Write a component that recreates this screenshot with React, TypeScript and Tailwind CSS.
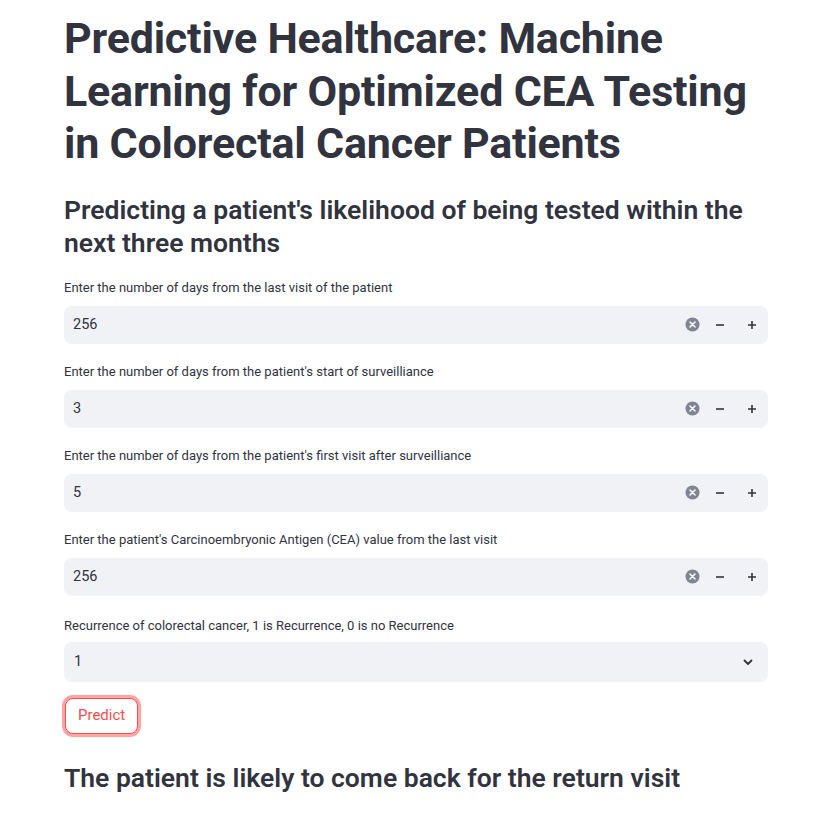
import { useState } from "react";

const FIELDS = [
  { label: "Enter the number of days from the last visit of the patient", value: "256" },
  { label: "Enter the number of days from the patient's start of surveilliance", value: "3" },
  { label: "Enter the number of days from the patient's first visit after surveilliance", value: "5" },
  { label: "Enter the patient's Carcinoembryonic Antigen (CEA) value from the last visit", value: "256" },
];

function ClearIcon() {
  return (
    <svg width="15" height="15" viewBox="0 0 16 16">
      <circle cx="8" cy="8" r="7.5" fill="#808495" />
      <path d="M5.3 5.3l5.4 5.4M10.7 5.3l-5.4 5.4" stroke="#fff" strokeWidth="1.6" strokeLinecap="round" />
    </svg>
  );
}

function NumberField({ label, initial }: { label: string; initial: string }) {
  const [val, setVal] = useState(initial);
  const step = (d: number) => setVal(v => String((parseInt(v || "0", 10) || 0) + d));
  return (
    <div className="mb-[18px]">
      <div className="text-[13px] leading-[20px] mb-[8px] text-[#31333f]">{label}</div>
      <div className="flex items-center h-[38px] rounded-[8px] bg-[#f0f2f6]">
        <input
          className="flex-1 min-w-0 bg-transparent outline-none pl-[9px] text-[14.5px] text-[#31333f]"
          value={val}
          onChange={e => setVal(e.target.value)}
        />
        <button className="w-[24px] h-full flex items-center justify-center" onClick={() => setVal("")}>
          <ClearIcon />
        </button>
        <button className="w-[32px] h-full flex items-center justify-center text-[#31333f]" onClick={() => step(-1)}>
          <svg width="10" height="10" viewBox="0 0 10 10"><path d="M1 5h8" stroke="currentColor" strokeWidth="1.6" /></svg>
        </button>
        <button className="w-[32px] h-full flex items-center justify-center text-[#31333f]" onClick={() => step(1)}>
          <svg width="10" height="10" viewBox="0 0 10 10"><path d="M1 5h8M5 1v8" stroke="currentColor" strokeWidth="1.6" /></svg>
        </button>
      </div>
    </div>
  );
}

export default function App() {
  return (
    <div className="min-h-[837px] bg-white text-[#31333f] font-['Roboto',sans-serif]">
      <div className="ml-[64px] w-[704px] pt-[12px]">
        <h1 className="text-[43px] leading-[52.5px] font-bold tracking-[-0.2px] mb-[23px]">
          Predictive Healthcare: Machine Learning for Optimized CEA Testing in Colorectal Cancer Patients
        </h1>
        <h3 className="text-[26.5px] leading-[33px] font-semibold mb-[19px]">
          Predicting a patient's likelihood of being tested within the next three months
        </h3>
        {FIELDS.map(f => (
          <NumberField key={f.label} label={f.label} initial={f.value} />
        ))}
        <div className="pt-[2px] mb-[16px]">
          <div className="text-[13px] leading-[20px] mb-[6px]">Recurrence of colorectal cancer, 1 is Recurrence, 0 is no Recurrence</div>
          <div className="flex items-center h-[40px] rounded-[8px] bg-[#f0f2f6] pl-[10px] pr-[14px]">
            <span className="flex-1 text-[14.5px]">1</span>
            <svg width="12" height="12" viewBox="0 0 12 12">
              <path d="M2.5 4.5L6 8l3.5-3.5" fill="none" stroke="#31333f" strokeWidth="1.8" strokeLinecap="round" strokeLinejoin="round" />
            </svg>
          </div>
        </div>
        <button className="ml-[1px] h-[36px] px-[12px] rounded-[8px] border border-[#ff4b4b] text-[#ff4b4b] text-[15px] bg-white shadow-[0_0_0_3px_rgba(255,75,75,0.5)]">
          Predict
        </button>
        <h3 className="mt-[27px] text-[26.5px] leading-[33px] font-semibold">
          The patient is likely to come back for the return visit
        </h3>
      </div>
    </div>
  );
}
